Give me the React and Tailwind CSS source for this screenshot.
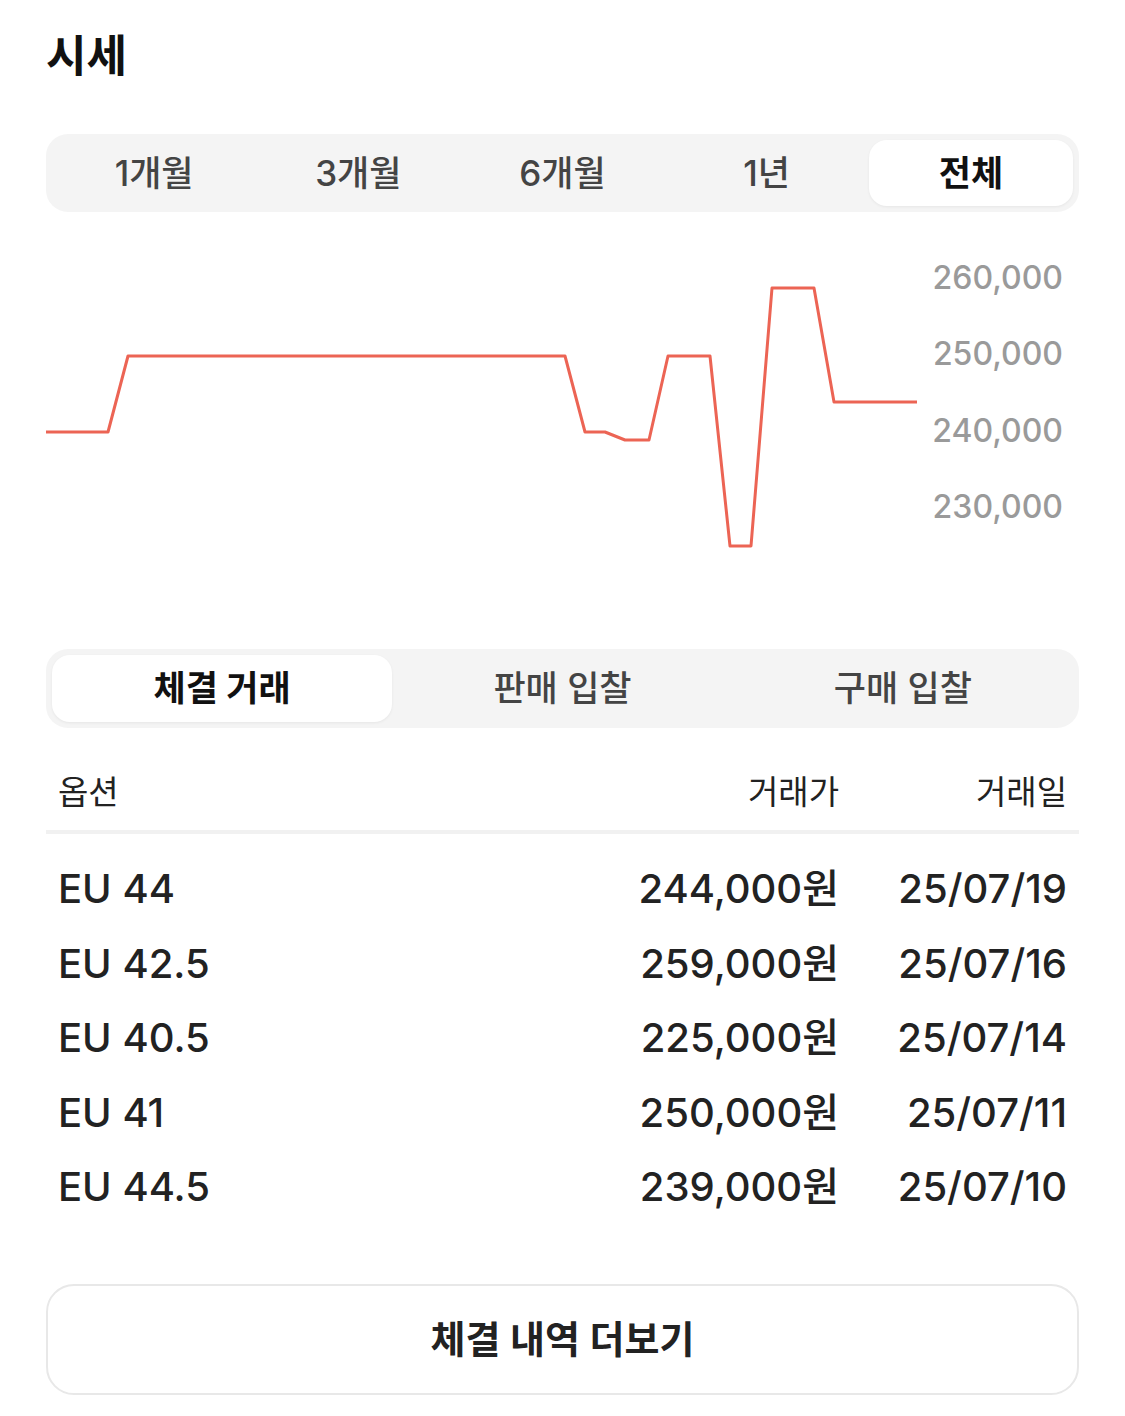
import { useState } from 'react';

const periods = ['1개월', '3개월', '6개월', '1년', '전체'];
const tradeTabs = ['체결 거래', '판매 입찰', '구매 입찰'];

const trades = [
  { option: 'EU 44', price: '244,000원', date: '25/07/19' },
  { option: 'EU 42.5', price: '259,000원', date: '25/07/16' },
  { option: 'EU 40.5', price: '225,000원', date: '25/07/14' },
  { option: 'EU 41', price: '250,000원', date: '25/07/11' },
  { option: 'EU 44.5', price: '239,000원', date: '25/07/10' },
];

// chart points in px, relative to the svg box
const points = [
  [0, 220], [62, 220], [82, 144], [519, 144], [539, 220], [559, 220],
  [579, 228], [603, 228], [622, 144], [664, 144], [684, 334], [705, 334],
  [726, 76], [768, 76], [788, 190], [871, 190],
];

const yLabels = [
  { label: '260,000', y: 65 },
  { label: '250,000', y: 141 },
  { label: '240,000', y: 218 },
  { label: '230,000', y: 294 },
];

function Segmented({ items, active, onChange, textClass }) {
  return (
    <div className="flex rounded-[22px] bg-[#f4f4f4] p-[6px]">
      {items.map((item) => (
        <button
          key={item}
          onClick={() => onChange(item)}
          className={`flex-1 rounded-[18px] ${textClass} ${
            item === active
              ? 'bg-white font-bold text-[#111] shadow-[0_1px_3px_rgba(0,0,0,0.06)]'
              : 'font-medium text-[#444]'
          }`}
        >
          {item}
        </button>
      ))}
    </div>
  );
}

function PriceChart() {
  return (
    <svg width="1032" height="437" viewBox="0 0 1032 437" className="block">
      <polyline
        points={points.map((p) => p.join(',')).join(' ')}
        fill="none"
        stroke="#ec6454"
        strokeWidth="3"
        strokeLinejoin="round"
      />
      {yLabels.map((l) => (
        <text
          key={l.label}
          x="1017"
          y={l.y}
          textAnchor="end"
          dominantBaseline="central"
          fill="#9a9a9a"
          fontSize="32"
          fontWeight="500"
          fontFamily="Inter, 'Noto Sans CJK KR', sans-serif"
        >
          {l.label}
        </text>
      ))}
    </svg>
  );
}

export default function App() {
  const [period, setPeriod] = useState('전체');
  const [tab, setTab] = useState('체결 거래');

  return (
    <div className="min-h-[1416px] bg-white px-[46px] pt-[30px] font-['Inter','Noto_Sans_CJK_KR',sans-serif] text-[#222]">
      <h2 className="text-[44px] leading-[53px] font-bold text-[#111]">시세</h2>

      <div className="mt-[51px]">
        <Segmented
          items={periods}
          active={period}
          onChange={setPeriod}
          textClass="h-[66px] text-[35px]"
        />
      </div>

      <PriceChart />

      <Segmented
        items={tradeTabs}
        active={tab}
        onChange={setTab}
        textClass="h-[67px] text-[35px]"
      />

      <div className="mt-[44px] flex px-[12px] pb-[18px] text-[33px] leading-[40px]">
        <span className="flex-1">옵션</span>
        <span className="text-right">거래가</span>
        <span className="w-[228px] text-right">거래일</span>
      </div>
      <div className="h-[4px] bg-[#f1f1f1]" />

      <div className="pt-[18px]">
        {trades.map((t) => (
          <div
            key={t.date}
            className="flex h-[74.5px] items-center px-[12px] text-[40px] font-medium text-[#222]"
          >
            <span className="flex-1">{t.option}</span>
            <span className="text-right">{t.price}</span>
            <span className="w-[228px] text-right">{t.date}</span>
          </div>
        ))}
      </div>

      <button className="mt-[59px] flex h-[111px] w-full items-center justify-center rounded-[28px] border-2 border-[#e8e8e8] text-[38px] font-semibold text-[#222]">
        체결 내역 더보기
      </button>
    </div>
  );
}
